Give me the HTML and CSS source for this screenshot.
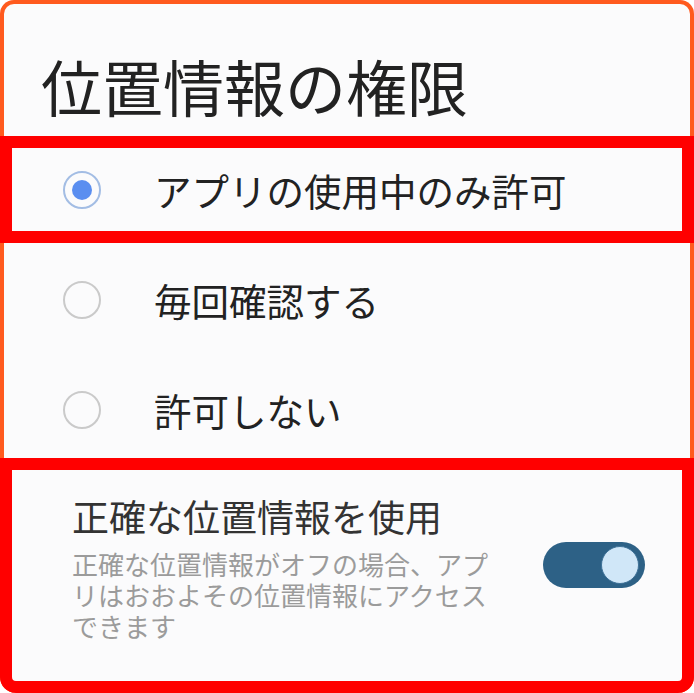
FILE: index.html
```html
<!DOCTYPE html>
<html lang="ja">
<head>
  <meta charset="UTF-8">
  <title>位置情報の権限</title>
  <link rel="stylesheet" href="styles.css">
</head>
<body>

  <div class="screen">
    <h1 class="title">位置情報の権限</h1>

    <div class="highlight">
      <div class="option option-first">
        <span class="radio checked"></span>
        <span class="label">アプリの使用中のみ許可</span>
      </div>
    </div>

    <div class="options">
      <div class="option">
        <span class="radio"></span>
        <span class="label">毎回確認する</span>
      </div>
      <div class="option">
        <span class="radio"></span>
        <span class="label">許可しない</span>
      </div>
    </div>

    <div class="highlight highlight-bottom">
      <div class="precise">
        <div class="precise-text">
          <div class="precise-title">正確な位置情報を使用</div>
          <div class="precise-desc">正確な位置情報がオフの場合、アプリはおおよその位置情報にアクセスできます</div>
        </div>
        <div class="toggle"><span class="knob"></span></div>
      </div>
    </div>
  </div>

</body>
</html>
```

FILE: styles.css
```css
body {
  margin: 0;
  background: #fff;
  font-family: "Noto Sans CJK JP", sans-serif;
}
.screen {
  box-sizing: border-box;
  width: 694px;
  height: 693px;
  border: 4px solid #ff5a1e;
  border-bottom: 0;
  border-radius: 14px 14px 16px 16px;
  background: #fbfbfc;
  display: flex;
  flex-direction: column;
}
.title {
  margin: 0;
  padding: 47px 0 15px 37px;
  font-size: 61px;
  line-height: 70px;
  font-weight: 400;
  color: #222;
}
.highlight {
  margin: 0 -4px;
  border: 12px solid #ff0000;
  background: #fbfbfc;
}
.highlight-bottom {
  flex: 1;
  border-radius: 0 0 16px 16px;
}
.option {
  display: flex;
  align-items: center;
  height: 90px;
}
.option-first {
  height: 83px;
  padding-left: 51px;
}
.options {
  display: flex;
  flex-direction: column;
  gap: 20px;
  padding: 12px 0 3px 59px;
}
.radio {
  box-sizing: border-box;
  width: 38px;
  height: 38px;
  border: 2px solid #cacaca;
  border-radius: 50%;
  display: flex;
  align-items: center;
  justify-content: center;
  flex-shrink: 0;
}
.radio.checked {
  border-color: #a3bde4;
}
.radio.checked::after {
  content: "";
  width: 20px;
  height: 20px;
  border-radius: 50%;
  background: #5a8ef0;
}
.label {
  margin-left: 53px;
  font-size: 37.5px;
  line-height: 44px;
  color: #222;
}
.precise {
  display: flex;
  align-items: center;
  justify-content: space-between;
  padding: 24px 37px 0 60px;
}
.precise-text {
  width: 430px;
}
.precise-title {
  font-size: 37px;
  line-height: 44px;
  color: #333;
  margin-bottom: 10px;
}
.precise-desc {
  font-size: 26px;
  line-height: 31px;
  color: #9b9b9b;
}
.toggle {
  box-sizing: border-box;
  width: 102px;
  height: 46px;
  border-radius: 23px;
  background: #2d6186;
  display: flex;
  align-items: center;
  justify-content: flex-end;
  padding-right: 6px;
  margin-top: -6px;
}
.knob {
  box-sizing: border-box;
  width: 38px;
  height: 38px;
  border-radius: 50%;
  background: #d0e7f8;
  border: 1px solid #3f7298;
}
```
